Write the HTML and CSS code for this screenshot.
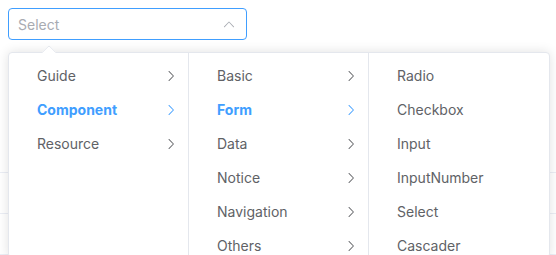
FILE: index.html
```html
<!DOCTYPE html>
<html>
<head>
<meta charset="utf-8">
<link rel="stylesheet" href="styles.css">
</head>
<body>
<div class="page">
  <div class="select">
    <div class="select-input">
      <span class="placeholder">Select</span>
      <svg class="caret" viewBox="0 0 1024 1024"><path fill="currentColor" d="M488.832 344.32l-339.84 356.672a32 32 0 0 0 0 44.16l.384.384a29.440 29.440 0 0 0 42.688 0l320-335.872 319.872 335.872a29.44 29.44 0 0 0 42.688 0l.384-.384a32 32 0 0 0 0-44.16L535.168 344.32a32 32 0 0 0-46.336 0z"/></svg>
    </div>
    <div class="popper">
      <span class="popper-arrow"></span>
      <div class="panel">
        <ul class="menu">
          <li class="node"><span class="label">Guide</span><svg class="postfix" viewBox="0 0 1024 1024"><path fill="currentColor" d="M340.864 149.312a30.592 30.592 0 0 0 0 42.752L652.736 512 340.864 831.872a30.592 30.592 0 0 0 0 42.752 29.12 29.12 0 0 0 41.728 0L714.24 534.336a32 32 0 0 0 0-44.672L382.592 149.376a29.12 29.12 0 0 0-41.728 0z"/></svg></li>
          <li class="node active"><span class="label">Component</span><svg class="postfix" viewBox="0 0 1024 1024"><path fill="currentColor" d="M340.864 149.312a30.592 30.592 0 0 0 0 42.752L652.736 512 340.864 831.872a30.592 30.592 0 0 0 0 42.752 29.12 29.12 0 0 0 41.728 0L714.24 534.336a32 32 0 0 0 0-44.672L382.592 149.376a29.12 29.12 0 0 0-41.728 0z"/></svg></li>
          <li class="node"><span class="label">Resource</span><svg class="postfix" viewBox="0 0 1024 1024"><path fill="currentColor" d="M340.864 149.312a30.592 30.592 0 0 0 0 42.752L652.736 512 340.864 831.872a30.592 30.592 0 0 0 0 42.752 29.12 29.12 0 0 0 41.728 0L714.24 534.336a32 32 0 0 0 0-44.672L382.592 149.376a29.12 29.12 0 0 0-41.728 0z"/></svg></li>
        </ul>
        <ul class="menu">
          <li class="node"><span class="label">Basic</span><svg class="postfix" viewBox="0 0 1024 1024"><path fill="currentColor" d="M340.864 149.312a30.592 30.592 0 0 0 0 42.752L652.736 512 340.864 831.872a30.592 30.592 0 0 0 0 42.752 29.12 29.12 0 0 0 41.728 0L714.24 534.336a32 32 0 0 0 0-44.672L382.592 149.376a29.12 29.12 0 0 0-41.728 0z"/></svg></li>
          <li class="node active"><span class="label">Form</span><svg class="postfix" viewBox="0 0 1024 1024"><path fill="currentColor" d="M340.864 149.312a30.592 30.592 0 0 0 0 42.752L652.736 512 340.864 831.872a30.592 30.592 0 0 0 0 42.752 29.12 29.12 0 0 0 41.728 0L714.24 534.336a32 32 0 0 0 0-44.672L382.592 149.376a29.12 29.12 0 0 0-41.728 0z"/></svg></li>
          <li class="node"><span class="label">Data</span><svg class="postfix" viewBox="0 0 1024 1024"><path fill="currentColor" d="M340.864 149.312a30.592 30.592 0 0 0 0 42.752L652.736 512 340.864 831.872a30.592 30.592 0 0 0 0 42.752 29.12 29.12 0 0 0 41.728 0L714.24 534.336a32 32 0 0 0 0-44.672L382.592 149.376a29.12 29.12 0 0 0-41.728 0z"/></svg></li>
          <li class="node"><span class="label">Notice</span><svg class="postfix" viewBox="0 0 1024 1024"><path fill="currentColor" d="M340.864 149.312a30.592 30.592 0 0 0 0 42.752L652.736 512 340.864 831.872a30.592 30.592 0 0 0 0 42.752 29.12 29.12 0 0 0 41.728 0L714.24 534.336a32 32 0 0 0 0-44.672L382.592 149.376a29.12 29.12 0 0 0-41.728 0z"/></svg></li>
          <li class="node"><span class="label">Navigation</span><svg class="postfix" viewBox="0 0 1024 1024"><path fill="currentColor" d="M340.864 149.312a30.592 30.592 0 0 0 0 42.752L652.736 512 340.864 831.872a30.592 30.592 0 0 0 0 42.752 29.12 29.12 0 0 0 41.728 0L714.24 534.336a32 32 0 0 0 0-44.672L382.592 149.376a29.12 29.12 0 0 0-41.728 0z"/></svg></li>
          <li class="node"><span class="label">Others</span><svg class="postfix" viewBox="0 0 1024 1024"><path fill="currentColor" d="M340.864 149.312a30.592 30.592 0 0 0 0 42.752L652.736 512 340.864 831.872a30.592 30.592 0 0 0 0 42.752 29.12 29.12 0 0 0 41.728 0L714.24 534.336a32 32 0 0 0 0-44.672L382.592 149.376a29.12 29.12 0 0 0-41.728 0z"/></svg></li>
        </ul>
        <ul class="menu">
          <li class="node"><span class="label">Radio</span></li>
          <li class="node"><span class="label">Checkbox</span></li>
          <li class="node"><span class="label">Input</span></li>
          <li class="node"><span class="label">InputNumber</span></li>
          <li class="node"><span class="label">Select</span></li>
          <li class="node"><span class="label">Cascader</span></li>
        </ul>
      </div>
    </div>
  </div>
  <div class="table">
    <div class="row"></div>
    <div class="row"></div>
    <div class="row"></div>
  </div>
</div>
</body>
</html>
```
FILE: styles.css
```css
html, body {
  margin: 0;
  padding: 0;
  background: #fff;
}
body {
  font-family: Inter, "Helvetica Neue", "Liberation Sans", sans-serif;
  font-size: 14px;
  color: #606266;
  overflow: hidden;
}
.page {
  padding: 8px;
}
.select {
  position: relative;
  width: 239px;
}
.select-input {
  box-sizing: border-box;
  height: 32px;
  border: 1px solid #409eff;
  border-radius: 4px;
  display: flex;
  align-items: center;
  padding: 0 10px 0 9px;
}
.placeholder {
  flex: 1;
  color: #a8abb2;
  font-size: 14px;
}
.caret {
  width: 14px;
  height: 14px;
  color: #a8abb2;
}
.popper {
  position: absolute;
  top: 44px;
  left: 0;
  z-index: 10;
  background: #fff;
  border: 1px solid #e4e7ed;
  border-radius: 4px;
  box-shadow: 0 0 12px rgba(0, 0, 0, 0.12);
}
.popper-arrow {
  position: absolute;
  top: -6px;
  left: 35px;
  width: 10px;
  height: 10px;
  box-sizing: border-box;
  background: #fff;
  border: 1px solid #e4e7ed;
  border-right-color: transparent;
  border-bottom-color: transparent;
  border-top-left-radius: 2px;
  transform: rotate(45deg);
}
.panel {
  display: flex;
  position: relative;
  border-radius: 4px;
  overflow: hidden;
}
.menu {
  box-sizing: border-box;
  width: 180px;
  height: 204px;
  margin: 0;
  padding: 6px 0;
  list-style: none;
  border-right: 1px solid #e4e7ed;
}
.menu:last-child {
  border-right: none;
}
.node {
  position: relative;
  display: flex;
  align-items: center;
  height: 34px;
  line-height: 34px;
  padding: 0 30px 0 20px;
}
.label {
  flex: 1;
  padding: 0 8px;
  white-space: nowrap;
}
.postfix {
  position: absolute;
  right: 10px;
  top: 10px;
  width: 14px;
  height: 14px;
}
.node.active {
  color: #409eff;
  font-weight: 700;
}
.table {
  margin: 92px -8px 0 -8px;
}
.row {
  height: 40px;
  border-bottom: 1px solid #ebeef5;
}
```
